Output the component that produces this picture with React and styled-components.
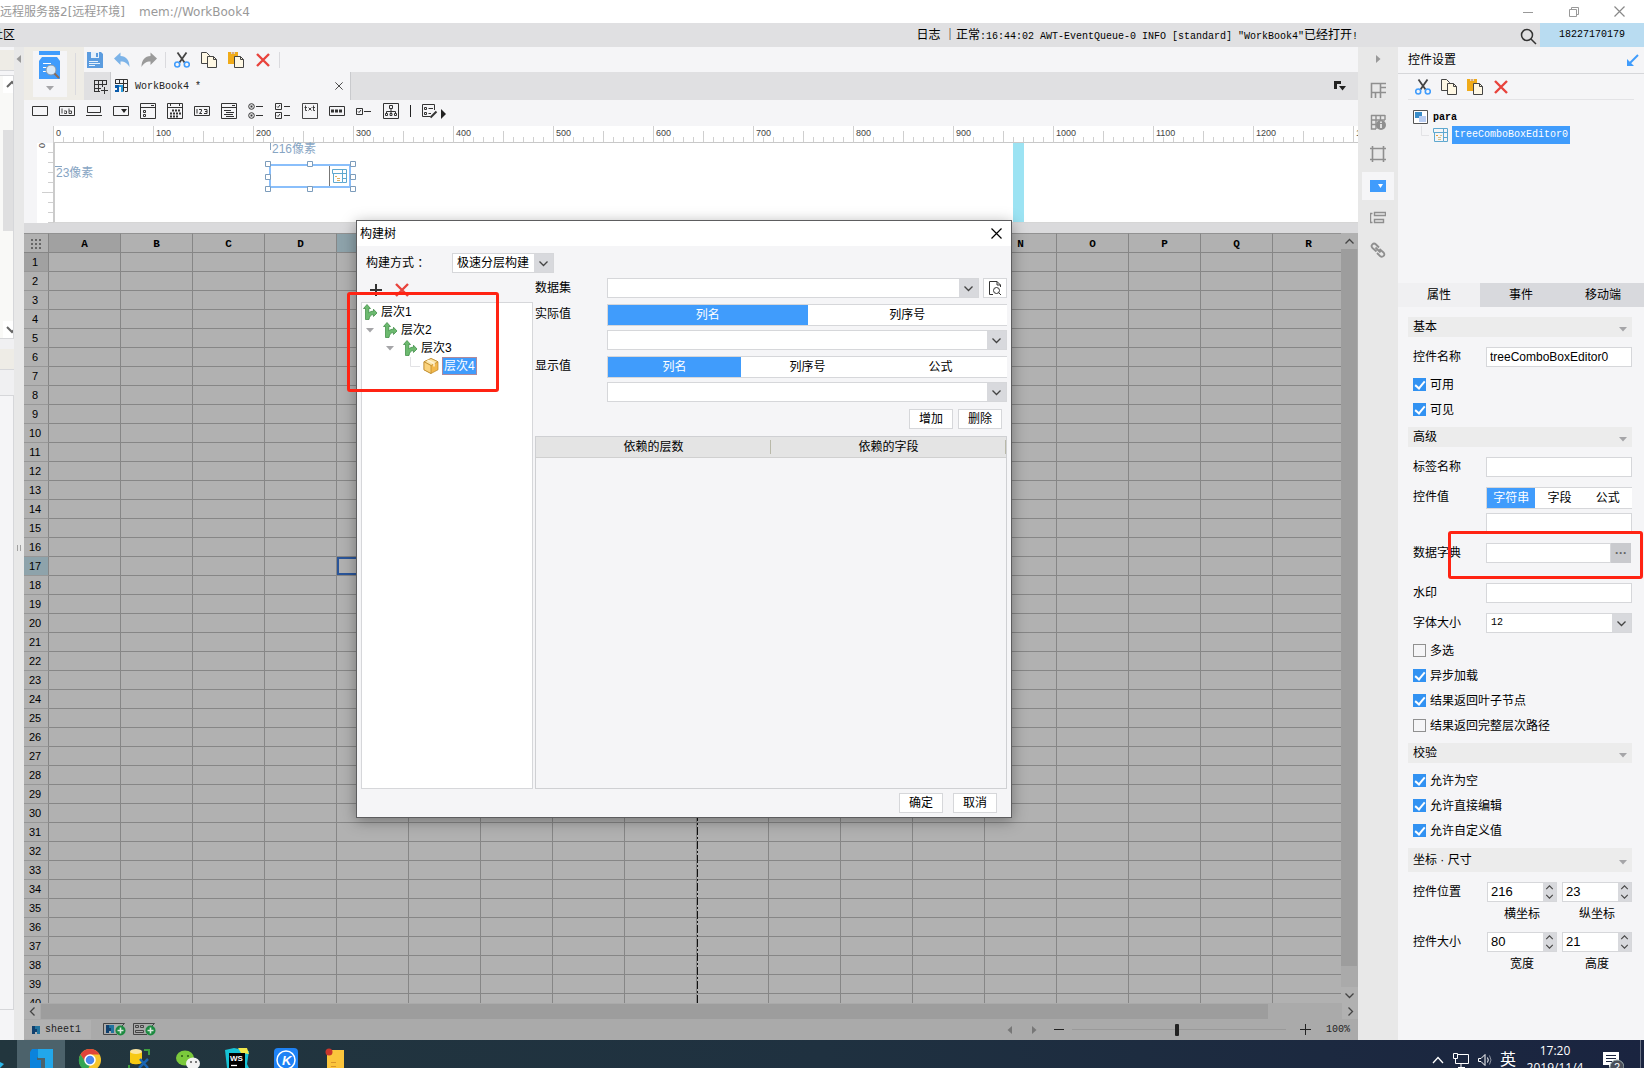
import React, { useState } from "react";
import styled, { createGlobalStyle, css } from "styled-components";

const GlobalStyle = createGlobalStyle`
  * {
    box-sizing: border-box;
  }

  body {
    margin: 0;
    overflow: hidden;
    background: #f5f5f7;
    color: #000;
    font-family: "Liberation Sans", "Noto Sans CJK SC", sans-serif;
    font-size: 12px;
    line-height: 16px;
  }

  button, input, select {
    margin: 0;
    padding: 0;
    border: none;
    border-radius: 0;
    outline: none;
    color: inherit;
    font: inherit;
    background: transparent;
  }

  svg {
    display: block;
    flex: none;
  }
`;

const mono = css`
  font-family: "Liberation Mono", "Noto Sans CJK SC", monospace;
  font-size: 10px;
`;

/* ---------- shell ---------- */

const Desktop = styled.div`
  position: relative;
  display: flex;
  flex-direction: column;
  height: 100vh;
  overflow: hidden;
`;

const TitleBar = styled.header`
  display: flex;
  align-items: center;
  justify-content: space-between;
  height: 23px;
  flex: none;
  background: #fff;
  color: #999;
  font-family: "DejaVu Sans", "Noto Sans CJK SC", sans-serif;

  p {
    display: flex;
    gap: 14px;
    margin: 0;
    white-space: nowrap;
  }

  div {
    display: flex;
    gap: 34px;
    padding-right: 19px;
  }
`;

const MenuBar = styled.div`
  display: flex;
  align-items: stretch;
  height: 24px;
  flex: none;
  overflow: hidden;
  background: #e0e0e2;
  line-height: 24px;
  white-space: nowrap;
`;

const CutMenu = styled.div`
  display: flex;
  justify-content: flex-end;
  width: 15px;
  overflow: hidden;
`;

const StatusLine = styled.p`
  flex: 1;
  margin: 0;
  padding-right: 160px;
  text-align: right;
`;

const Mono = styled.span`
  ${mono}
  white-space: pre;
`;

const SearchButton = styled.button`
  width: 22px;
  padding: 2px 0 0 2px;
`;

const Account = styled.a`
  ${mono}
  width: 104px;
  background: #b9dcf1;
  color: #000;
  text-align: center;
  text-decoration: none;
`;

const Workspace = styled.div`
  display: flex;
  flex: 1;
  min-height: 0;
`;

/* ---------- left edge ---------- */

const LeftEdge = styled.aside`
  display: flex;
  flex-direction: column;
  width: 14px;
  background: #f5f5f7;
`;

const EdgeStrip = styled.div`
  height: ${(p) => p.$h}px;
  background: ${(p) => p.$bg};
  border-bottom: ${(p) => (p.$line ? "1px solid #d6d7da" : "none")};
`;

const EdgeScroll = styled.div`
  display: flex;
  flex-direction: column;
  height: 264px;
  margin-top: 4px;
  padding-left: 3px;
  border: 1px solid #d6d7da;
  border-left: none;
  background: #f9f9f7;

  svg {
    background: #fff;
  }

  div {
    height: 101px;
    margin: 37px 0 90px;
    background: #dfdfe0;
  }
`;

const EdgeBox = styled.div`
  flex: 1;
  margin-bottom: 30px;
  border-right: 1px solid #d6d7da;
  border-bottom: 1px solid #d6d7da;
`;

const Splitter = styled.div`
  display: flex;
  flex-direction: column;
  align-items: center;
  justify-content: space-between;
  width: 10px;
  padding-top: 7px;
  background: #e8e8e8;

  i {
    width: 4px;
    height: 6px;
    margin-bottom: 489px;
    border: solid #a0a0a0;
    border-width: 0 1px;
  }
`;

/* ---------- editor ---------- */

const Editor = styled.main`
  display: flex;
  flex-direction: column;
  flex: 1;
  min-width: 0;
`;

const EditorHead = styled.div`
  display: flex;
  height: 53px;
  flex: none;
`;

const PreviewBlock = styled.div`
  display: flex;
  align-items: center;
  gap: 8px;
  width: 60px;
  padding-left: 9px;
  background: #eeece6;

  button {
    display: flex;
    flex-direction: column;
    align-items: center;
    gap: 4px;
    width: 34px;
    height: 46px;
    padding-bottom: 2px;
    background: #f5f5f7;
  }
`;

const Divider = styled.i`
  width: 1px;
  height: ${(p) => p.$h || 16}px;
  background: ${(p) => p.$color || "#dadade"};
`;

const HeadColumn = styled.div`
  display: flex;
  flex-direction: column;
  flex: 1;
`;

const ToolRow = styled.div`
  display: flex;
  align-items: center;
  gap: 8px;
  height: 25px;
  padding-left: 3px;
`;

const ToolGroup = styled.div`
  display: flex;
  gap: ${(p) => p.$gap || 11}px;
`;

const IconButton = styled.button`
  display: flex;
  align-items: center;
  justify-content: center;
  width: 16px;
  height: 16px;
`;

const TabRow = styled.div`
  display: flex;
  align-items: center;
  height: 28px;
  padding-left: 8px;
  background: #e0e0e2;

  > button:last-child {
    margin: 0 10px 0 auto;
  }
`;

const BookTab = styled.div`
  ${mono}
  display: flex;
  align-items: center;
  gap: 6px;
  width: 241px;
  height: 28px;
  margin-left: 2px;
  padding: 0 3px 0 4px;
  border: solid #c9cacd;
  border-width: 0 1px;
  background: #f5f5f7;
  color: #222;

  span {
    padding-top: 2px;
  }

  button {
    margin-left: auto;
  }
`;

const WidgetRow = styled.div`
  display: flex;
  align-items: center;
  gap: 11px;
  height: 26px;
  flex: none;
  padding: 0 0 4px 8px;
  background: #f5f5f7;
  color: #333;
`;

const RulerRow = styled.div`
  display: flex;
  height: 17px;
  flex: none;
  padding-left: 29px;
  overflow: hidden;
  background: linear-gradient(to right, #f5f5f7 29px, #fff 29px);
`;

const RulerStep = styled.span`
  width: 100px;
  flex: none;
  padding: 0 2px;
  border-left: 1px solid #cfcfcf;
  border-bottom: 1px solid #c8c8c8;
  background:
    repeating-linear-gradient(to right, transparent 0 9px, #d0d0d0 9px 10px) left bottom / 100% 5px no-repeat,
    linear-gradient(#cfcfcf, #cfcfcf) 49px bottom / 1px 11px no-repeat;
  color: #444;
  font-size: 9px;
  line-height: 14px;
`;

const CanvasRow = styled.div`
  display: flex;
  height: 80px;
  flex: none;
  padding-left: 13px;
  background: #f5f5f7;
`;

const SideRuler = styled.div`
  width: 16px;
  background:
    repeating-linear-gradient(to bottom, transparent 0 9px, #d0d0d0 9px 10px) right top / 5px 100% no-repeat,
    linear-gradient(#cfcfcf, #cfcfcf) right 49px / 11px 1px no-repeat #fff;
  color: #444;
  font-size: 9px;
  line-height: 10px;
  writing-mode: vertical-lr;
`;

const Canvas = styled.div`
  position: relative;
  flex: 1;
  border-left: 2px solid #cbcbcb;
  border-bottom: 1px solid #d6d6d6;
  background: linear-gradient(#9ce3f3, #9ce3f3) 958px 0 / 11px 100% no-repeat #fff;
`;

const SizeHint = styled.span`
  position: absolute;
  left: ${(p) => p.$x}px;
  top: ${(p) => p.$y}px;
  color: #87a5c3;
`;

const HintMarks = styled.div`
  position: absolute;
  left: 0;
  top: 0;
`;

const Placed = styled.div`
  position: absolute;
  left: 210px;
  top: 17px;
`;

const GridSplit = styled.div`
  height: 10px;
  flex: none;
  background: #dadadc;
`;

/* ---------- sheet ---------- */

const SheetArea = styled.div`
  display: flex;
  flex: 1;
  min-height: 0;
  background: #b1b1b1;
`;

const SheetView = styled.div`
  position: relative;
  flex: 1;
  min-width: 0;
  overflow: hidden;
`;

const Sheet = styled.table`
  width: 1321px;
  border-spacing: 0;
  table-layout: fixed;

  th, td {
    height: 19px;
    padding: 0;
    border: solid #868686;
    border-width: 0 1px 1px 0;
    font-size: 11px;
    font-weight: normal;
    line-height: 16px;
  }

  thead th {
    height: 20px;
    padding-top: 1px;
    border-top: 1px solid #929292;
    font-family: "Liberation Mono", monospace;
    font-weight: bold;
  }

  tbody th {
    padding-right: 2px;
    border-bottom-color: #979797;
  }
`;

const HeadCell = styled.th`
  width: ${(p) => (p.$corner ? 25 : 72)}px;
  background: ${(p) => (p.$active ? "#8ea3ab" : p.$first ? "#a1a1a1" : "#b1b1b1")};

  svg {
    margin: 0 auto;
  }
`;

const Cell = styled.td`
  box-shadow: ${(p) => (p.$selected ? "0 0 0 2px #2a5599 inset" : "none")};
`;

const PageBreak = styled.i`
  position: absolute;
  top: 20px;
  bottom: 0;
  left: 673px;
  width: 1px;
  background: repeating-linear-gradient(#111 0 8px, transparent 8px 10px, #111 10px 12px, transparent 12px 14px);
`;

const VScroll = styled.div`
  display: flex;
  flex-direction: column;
  width: 17px;
  background: #aaa;

  button {
    display: flex;
    justify-content: center;
    align-items: center;
    height: 16px;
    background: #b1b1b1;
  }

  div {
    flex: 1;
    margin: 0 1px 21px 0;
    background: #9d9d9d;
  }
`;

const HScroll = styled.div`
  display: flex;
  height: 16px;
  flex: none;
  background: #aaa;

  button {
    display: flex;
    justify-content: center;
    align-items: center;
    width: 16px;
    background: #b1b1b1;
  }

  div {
    flex: 1;
    margin: 1px 74px 0 1px;
    background: #9d9d9d;
  }
`;

const SheetBar = styled.div`
  display: flex;
  align-items: center;
  height: 21px;
  flex: none;
  background: #aaa;
  color: #222;
`;

const SheetTab = styled.button`
  ${mono}
  display: flex;
  align-items: center;
  gap: 4px;
  width: 67px;
  height: 19px;
  margin-right: 12px;
  padding-left: 8px;
  background: #b1b1b1;
`;

const ZoomBox = styled.div`
  display: flex;
  align-items: center;
  gap: 8px;
  margin-left: auto;
  padding-right: 8px;

  > div {
    margin-right: 7px;
  }

  input {
    width: 214px;
    height: 14px;
    appearance: none;
    background: linear-gradient(#999, #999) center / 100% 1px no-repeat;
  }

  input::-webkit-slider-thumb {
    appearance: none;
    width: 4px;
    height: 12px;
    border-radius: 1px;
    background: #222;
  }

  output {
    ${mono}
    margin-left: 2px;
  }
`;

/* ---------- right rail and properties ---------- */

const Rail = styled.nav`
  display: flex;
  flex-direction: column;
  align-items: center;
  gap: 4px;
  width: 40px;
  flex: none;
  padding-top: 7px;
  background: #e8e8e8;
  color: #8f8f8f;

  > svg {
    margin-bottom: 8px;
  }
`;

const RailButton = styled.button`
  display: flex;
  align-items: center;
  justify-content: center;
  width: 32px;
  height: 28px;
  background: ${(p) => (p.$active ? "#f5f5f7" : "transparent")};
`;

const Props = styled.aside`
  display: flex;
  flex-direction: column;
  width: 246px;
  flex: none;
  background: #f5f5f7;
`;

const PropsTitle = styled.div`
  display: flex;
  align-items: center;
  justify-content: space-between;
  height: 27px;
  padding: 0 5px 0 10px;
  border-bottom: 1px solid #d6d7da;
`;

const PropsTools = styled.div`
  display: flex;
  align-items: center;
  gap: 10px;
  height: 26px;
  margin: 0 10px;
  padding-left: 7px;
  border-bottom: 1px solid #e3e3e6;
`;

const PropsTree = styled.div`
  ${mono}
  display: flex;
  flex-direction: column;
  height: 183px;
  padding: 8px 0 0 15px;

  div {
    display: flex;
    align-items: center;
    gap: 5px;
    height: 18px;
  }

  div + div {
    gap: 4px;
    margin-left: 8px;
  }

  b {
    padding-top: 2px;
  }
`;

const TreeMark = styled.span`
  padding: 0 1px;
  border: 1px solid ${(p) => p.$edge || "#409cfc"};
  background: #409cfc;
  color: #fff;
`;

const PropsTabs = styled.div`
  display: flex;
  height: 24px;
  flex: none;

  button {
    flex: 1;
    background: #d8d9dd;
  }

  button:first-child {
    background: #f0f0f2;
  }
`;

const PropsBody = styled.div`
  display: flex;
  flex-direction: column;
  padding: 10px 12px 0 10px;
`;

const Section = styled.h3`
  display: flex;
  align-items: center;
  justify-content: space-between;
  height: ${(p) => (p.$tall ? 24 : 20)}px;
  margin: 0;
  padding: 0 4px 0 5px;
  background: #ececec;
  font-size: 12px;
  font-weight: normal;

  svg {
    margin-top: 4px;
  }
`;

const Field = styled.div`
  position: relative;
  display: flex;
  margin-top: 10px;
  padding-bottom: ${(p) => (p.$loose ? 10 : 0)}px;

  > label, > span {
    width: 78px;
    flex: none;
    padding-left: 5px;
    line-height: 20px;
  }
`;

const TextInput = styled.input`
  width: 100%;
  min-width: 0;
  height: 20px;
  padding: 0 3px;
  border: 1px solid #d6d7da;
  background: #fff;
`;

const MoreButton = styled.button`
  width: 20px;
  height: 20px;
  flex: none;
  margin-right: 1px;
  background: #c9cace;
  color: #666;
  font-weight: bold;
  line-height: 12px;
`;

const ValueColumn = styled.div`
  display: flex;
  flex-direction: column;
  flex: 1;
  gap: 4px;

  > * {
    flex: none;
  }
`;

const Segments = styled.div`
  display: flex;
  height: 22px;
  border: 1px solid #d6d7da;
  border-right: none;
  background: #fff;

  button {
    flex: 1;
  }

  button[aria-pressed="true"] {
    background: #409cfc;
    color: #fff;
  }
`;

const Checks = styled.div`
  padding: 5px 0 5px 5px;

  label {
    display: flex;
    align-items: center;
    gap: 4px;
    height: 25px;
  }

  input {
    display: flex;
    justify-content: center;
    width: 13px;
    height: 13px;
    appearance: none;
    border: 1px solid #909090;
    background: #f5f5f7;
  }

  input:checked {
    border-color: #3292f2;
    background: #3292f2;
  }

  input:checked::after {
    content: "";
    width: 4px;
    height: 8px;
    border: solid #fff;
    border-width: 0 2px 2px 0;
    transform: rotate(40deg);
  }
`;

const SelectBox = styled.div`
  display: grid;
  width: ${(p) => (p.$w ? p.$w + "px" : "100%")};
  height: 20px;
  border: 1px solid #d6d7da;
  background: linear-gradient(to left, #d8d9dd 19px, #fff 19px);

  select, svg {
    grid-area: 1 / 1;
  }

  select {
    padding: 0 4px;
    appearance: none;
    ${(p) => p.$mono && mono}
  }

  svg {
    align-self: center;
    justify-self: end;
    margin-right: 4px;
    pointer-events: none;
  }
`;

const SpinGroup = styled.div`
  display: flex;
  flex: 1;
  gap: 5px;
  padding-left: 1px;
`;

const Spin = styled.div`
  flex: 1;
  min-width: 0;
  text-align: center;

  > div {
    display: flex;
    height: 20px;
    border: 1px solid #d6d7da;
    background: #fff;
  }

  input {
    flex: 1;
    width: 0;
    min-width: 0;
    padding-left: 3px;
    appearance: textfield;
    font-size: 13px;
  }

  input::-webkit-inner-spin-button {
    display: none;
  }

  span {
    display: flex;
    flex-direction: column;
    width: 13px;
    background: #d8d9dd;
  }

  button {
    display: flex;
    align-items: center;
    justify-content: center;
    flex: 1;
  }

  label {
    display: block;
    padding-top: 4px;
  }
`;

const Highlight = styled.i`
  position: absolute;
  left: ${(p) => p.$x}px;
  top: ${(p) => p.$y}px;
  width: ${(p) => p.$w}px;
  height: ${(p) => p.$h}px;
  border: 3px solid #ff2313;
  border-radius: 3px;
  pointer-events: none;
`;

/* ---------- dialog ---------- */

const Dialog = styled.section`
  position: absolute;
  left: 356px;
  top: 220px;
  display: flex;
  flex-direction: column;
  width: 656px;
  height: 598px;
  border: 1px solid #5d5d5f;
  background: #f5f5f7;
  box-shadow: 0 3px 14px rgba(0, 0, 0, 0.35);
`;

const DialogTitle = styled.div`
  display: flex;
  align-items: center;
  justify-content: space-between;
  height: 25px;
  padding: 0 9px 0 3px;
  background: #fff;
`;

const BuildMode = styled.div`
  display: flex;
  align-items: center;
  padding: 7px 0 0 9px;

  label {
    width: 86px;
  }
`;

const DialogColumns = styled.div`
  display: flex;
  gap: 2px;
  flex: 1;
  padding: 5px 4px 0 4px;
`;

const TreeColumn = styled.div`
  display: flex;
  flex-direction: column;
  width: 172px;

  > div:first-child {
    display: flex;
    gap: 10px;
    height: 24px;
    padding: 4px 0 0 7px;
  }
`;

const TreeBox = styled.ul`
  flex: 1;
  margin: 0;
  padding: 0 0 0 1px;
  border: 1px solid #d6d7da;
  background: #fff;
  list-style: none;

  li {
    display: flex;
    align-items: center;
    gap: 3px;
    height: 18px;
  }
`;

const TreeIndent = styled.span`
  display: flex;
  justify-content: flex-end;
  width: ${(p) => p.$depth * 20 - 3}px;
  padding-right: ${(p) => (p.$leaf ? 0 : 5)}px;
`;

const FormColumn = styled.div`
  display: flex;
  flex-direction: column;
  gap: 6px;
  flex: 1;
`;

const FormRow = styled.div`
  display: flex;
  gap: 4px;

  > label, > span {
    width: 68px;
    flex: none;
    line-height: 20px;
  }
`;

const PushButton = styled.button`
  width: ${(p) => p.$w || 44}px;
  height: 20px;
  flex: none;
  border: 1px solid #d6d7da;
  background: #fff;

  svg {
    margin: 0 auto;
  }
`;

const ButtonRow = styled.div`
  display: flex;
  justify-content: flex-end;
  gap: ${(p) => p.$gap}px;
  padding: ${(p) => p.$pad};
`;

const DependBox = styled.div`
  flex: 1;
  border: 1px solid #cfd0d3;

  table {
    width: 100%;
    border-spacing: 0;
    table-layout: fixed;
    background: #e4e4e4;
  }

  th {
    height: 21px;
    padding: 0;
    border-bottom: 1px solid #d0d0d0;
    background: linear-gradient(#b9b9a9, #b9b9a9) right center / 1px 14px no-repeat;
    font-weight: normal;
  }
`;

/* ---------- taskbar ---------- */

const Taskbar = styled.footer`
  display: flex;
  align-items: flex-start;
  height: 28px;
  flex: none;
  overflow: hidden;
  background: linear-gradient(to right, #22363e, #1f3140 50%, #1a2440);
  color: #fff;
`;

const TaskButton = styled.button`
  display: flex;
  justify-content: center;
  width: ${(p) => (p.$first ? 48 : 49)}px;
  height: 40px;
  padding-top: 8px;
  background: ${(p) => (p.$first ? "#4c626b" : "transparent")};
`;

const Tray = styled.div`
  display: flex;
  gap: 7px;
  margin-left: auto;
  padding-top: 10px;
  font-size: 16px;
  line-height: 20px;
`;

const Clock = styled.time`
  width: 64px;
  margin: -8px 8px 0 0;
  font-family: "Open Sans", sans-serif;
  font-size: 12px;
  line-height: 17px;
  text-align: center;
`;

const TrayEdge = styled.i`
  width: 1px;
  height: 40px;
  margin: -10px 3px 0 9px;
  background: #6a7284;
`;

/* ---------- icons ---------- */

function Svg({ w = 16, h = 16, children, ...rest }) {
  return (
    <svg width={w} height={h} viewBox={`0 0 ${w} ${h}`} fill="none" stroke="currentColor" aria-hidden="true" {...rest}>
      {children}
    </svg>
  );
}

const Chevron = ({ dir = "down", w = 11 }) => {
  const turn = { down: 0, up: 180, left: 90, right: 270 }[dir];
  return (
    <Svg w={w} h={w} viewBox="0 0 11 11" stroke="#444">
      <path d="M1.5 3.5L5.5 7.5L9.5 3.5" transform={`rotate(${turn} 5.5 5.5)`} strokeWidth="1.3" />
    </Svg>
  );
};

const Triangle = ({ dir = "down", color = "#a5a5a8" }) => {
  const turn = { down: 0, left: 90, right: 270 }[dir];
  return (
    <Svg w={10} h={10} fill={color} stroke="none">
      <path d="M1 3H9L5 7.5Z" transform={`rotate(${turn} 5 5)`} />
    </Svg>
  );
};

const SaveIcon = () => (
  <Svg stroke="none">
    <path d="M0 0H14L16 2V16H0Z" fill="#5b9cdf" />
    <path d="M4 0H12V6H4Z" fill="#e7f1fb" />
    <path d="M9 1H11V5H9Z" fill="#5b9cdf" />
    <path d="M2 9.5H11M2 11.5H13" stroke="#e7f1fb" />
    <path d="M2 13.5H8" stroke="#e7f1fb" />
  </Svg>
);

const ArrowIcon = ({ color, flip }) => (
  <Svg fill={color} stroke="none">
    <path d="M0 6.5L6.5 0.5V4C12 4 15.5 8 15.5 15C13.5 11.5 11 9.5 6.5 9.5V13Z" transform={flip ? "matrix(-1 0 0 1 16 0)" : undefined} />
  </Svg>
);

const CutIcon = () => (
  <Svg>
    <path d="M3.5 0.5L10.5 10.5M12.5 0.5L5.5 10.5" stroke="#444" strokeWidth="1.8" />
    <circle cx="3.2" cy="12.5" r="2.5" stroke="#409cfc" strokeWidth="1.6" />
    <circle cx="12.8" cy="12.5" r="2.5" stroke="#409cfc" strokeWidth="1.6" />
  </Svg>
);

const CopyIcon = () => (
  <Svg stroke="#444">
    <path d="M0.5 0.5H5.5L8.5 3.5V11.5H0.5Z" fill="#fff8e4" />
    <path d="M6.5 4.5H12.5L15.5 7.5V15.5H6.5Z" fill="#fff8e4" />
    <path d="M12.5 4.5V7.5H15.5" />
  </Svg>
);

const PasteIcon = () => (
  <Svg stroke="none">
    <path d="M0 0H10V12H0Z" fill="#f0ab19" />
    <path d="M3 0H7V2H3Z" fill="#fff" />
    <path d="M3.5 1H6.5" stroke="#a65a12" />
    <path d="M6.5 4.5H12.5L15.5 7.5V15.5H6.5Z" fill="#fff8e4" stroke="#444" />
    <path d="M12.5 4.5V7.5H15.5" stroke="#444" />
  </Svg>
);

const DeleteIcon = () => (
  <Svg stroke="#e8433c" strokeWidth="2.4">
    <path d="M2 2L14 14M14 2L2 14" />
  </Svg>
);

const CloseIcon = ({ size = 11, color = "#333" }) => (
  <Svg w={size} h={size} viewBox="0 0 11 11" stroke={color}>
    <path d="M0.5 0.5L10.5 10.5M10.5 0.5L0.5 10.5" strokeWidth="1.2" />
  </Svg>
);

const PreviewIcon = () => (
  <Svg w={22} h={28} stroke="none">
    <path d="M0 0H21V4H0Z" fill="#409cfc" />
    <path d="M0 10L3 6H18L21 10V28H0Z" fill="#409cfc" />
    <path d="M4 12.5H12M4 16.5H8M4 20.5H8" stroke="#fff" />
    <circle cx="12" cy="19" r="5" fill="#d8e8f7" stroke="#8a97a5" />
    <path d="M15.5 22.5L20 27" stroke="#8b6b55" strokeWidth="2" />
  </Svg>
);

const TreeComboIcon = () => (
  <Svg w={15} h={14} stroke="#5fa8cf">
    <path d="M0.5 0.5H14.5V13.5H10.5V0.5M0.5 0.5V4.5H14.5M1.5 4.5V13.5H10.5M10.5 9.5H14.5" />
    <path d="M3 7.5H5" stroke="#e8a13a" />
    <path d="M5 9.5H8M5 11.5H8M7 7.5H9" stroke="#d8c28a" />
  </Svg>
);

const ParaIcon = () => (
  <Svg w={15} h={14}>
    <path d="M0.5 0.5H14.5V13.5H0.5Z" stroke="#555" fill="#fff" />
    <path d="M2 2H9V8H2Z" fill="#3a8cc8" stroke="none" />
    <path d="M6 6H13V12H6Z" fill="#b9cdf2" stroke="none" />
  </Svg>
);

const AddBookIcon = () => (
  <Svg w={15} h={15} stroke="#333">
    <path d="M1.5 1V12.5M5.5 1V12.5M9.5 1V8M13.5 1V6M1 1.5H14M1 5.5H14M1 9.5H8M1 12.5H7M11.5 8V15M8 11.5H15" />
  </Svg>
);

const BookIcon = () => (
  <Svg w={14} h={14} stroke="#333">
    <path d="M0.5 5V0.5H12.5V12.5H10M4.5 0.5V5M8.5 0.5V12.5M0 4.5H12.5M9 8.5H12.5" />
    <path d="M0 6H4V8H4V13H0V11H2V9H0Z" fill="#0b5cab" stroke="none" />
    <path d="M4 6H8V13H6V8H4Z" fill="#2a9de0" stroke="none" />
  </Svg>
);

const SheetIcon = () => (
  <Svg w={9} h={10} stroke="none">
    <path d="M0 1H3V4H5V7H3V9H0Z" fill="#10406e" />
    <path d="M3 1H8V9H5V4H3Z" fill="#22739e" />
  </Svg>
);

const AddSheetIcon = ({ form }) => (
  <Svg w={23} h={13} stroke="#444">
    <path d="M14 11.5H0.5V0.5H21.5L19 3" />
    {form ? (
      <path d="M2.5 2.5H5.5V4.5H2.5ZM7.5 2.5H10.5V4.5H7.5ZM2.5 7.5H10.5V9.5H2.5Z" />
    ) : (
      <g stroke="none">
        <path d="M3 2H6V5H8V8H6V10H3Z" fill="#10406e" />
        <path d="M6 2H11V10H8V5H6Z" fill="#22739e" />
      </g>
    )}
    <circle cx="17.5" cy="7.5" r="5" fill="#1c8a40" stroke="none" />
    <path d="M17.5 4.5V10.5M14.5 7.5H20.5" stroke="#d8e8dc" strokeWidth="1.6" />
  </Svg>
);

const BranchIcon = () => (
  <Svg w={15} h={16} fill="#6cba6f" stroke="#37873d">
    <path d="M4 0.5L7.5 4.5H5.8V9C7 7.6 8.5 7.2 10.5 7.2V5.2L14 9L10.5 12.5V10.6C8 10.6 6.500 12 6 15.500H2.500V4.500H0.500Z" strokeWidth="0.7" />
  </Svg>
);

const CubeIcon = () => (
  <Svg stroke="#b98422" strokeWidth="0.7">
    <path d="M8 0.5L15 3.8V11.8L8 15.5L1 11.8V3.8Z" fill="#f2b84c" />
    <path d="M8 0.5L15 3.8L8 7.5L1 3.8Z" fill="#fde6a8" />
    <path d="M8 7.5V15.5L1 11.8V3.8Z" fill="#fad27c" />
    <path d="M4.5 2.2L11 5.500V8.500" stroke="#fff4d8" strokeWidth="1.4" />
  </Svg>
);

// form widgets, in toolbar order
const widgets = [
  ["文本", <path d="M0.5 3.5H15.5V12.5H0.5Z" />],
  ["标签", <g><path d="M0.5 3.5H15.5V12.5H0.5Z" /><path d="M3 5.5V10.5M5 8H7.5V10.5H5.5V9.5M10 5.5V10.5H12.5V8H10" strokeWidth="0.9" /></g>],
  ["按钮", <path d="M1.5 3.5H14.5V9.5H1.5ZM0 12.5H16" />],
  ["下拉框", <g><path d="M0.5 3.5H15.5V12.5H0.5Z" /><path d="M8 6H14L11 10Z" fill="#222" stroke="none" /></g>],
  ["复选下拉", <path d="M0.5 0.5H15.5V15.5H0.5ZM0.5 4.5H15.5M3.5 7.5H5.5V9.5H3.5ZM3.5 11.5H5.5V13.5H3.5ZM11 2.5H14" />],
  ["日期", <g><path d="M0.5 0.5H15.5V15.5H0.5ZM0.5 4.5H15.5M3.5 1V3M12.5 1V3" /><path d="M5 7.5H14M3 10.5H14M3 13.5H11" strokeWidth="2" strokeDasharray="2 1" /></g>],
  ["数字", <path d="M0.5 3.5H15.5V12.5H0.5ZM3 6V10.5M5 6.5H7.5V8L5.5 10.5H8M10 6.5H13V10.5H10M11 8.5H13" />],
  ["下拉树", <path d="M0.5 0.5H15.5V15.5H0.5ZM0.5 4.5H15.5M3 7.5H10M5 9.5H13M3 11.5H12M5 13.5H13M11 2.5H14" />],
  ["单选组", <g><circle cx="3.5" cy="3.5" r="2.8" /><circle cx="3.5" cy="12.5" r="2.8" /><path d="M2.5 3.5H4.5M2.5 12.5H4.5" strokeWidth="2" /><path d="M8 3.5H15M8 12.5H15" /></g>],
  ["复选组", <path d="M0.5 0.5H6.5V6.5H0.5ZM0.5 9.5H6.5V15.5H0.5ZM2 3.5L3 4.5L5 2M2 12.5L3 13.5L5 11M9 3.5H15M9 12.5H15" />],
  ["文本域", <path d="M0.5 0.5H15.5V15.5H0.5ZM3.5 2.5V7.5H5M2.5 4.5H5M6.5 4.5L9.5 7.5M9.5 4.5L6.5 7.5M11.5 2.5V7.5H13M10.5 4.5H13" strokeWidth="0.9" />],
  ["密码", <g><path d="M0.5 3.5H15.5V12.5H0.5Z" /><path d="M2 8H14" strokeWidth="3" strokeDasharray="3 1" /></g>],
  ["复选框", <path d="M0.5 5.5H6.5V11.5H0.5ZM2 8.5L3 9.5L5 7M8 8.5H15" />],
  ["视图树", <path d="M0.5 0.5H15.5V15.5H0.5ZM6.5 2.5H9.5V5.5H6.5ZM8 6V10M3.5 10V8.5H12.5V10M2.5 10.5H4.5V12.5H2.5ZM7 10.5H9V12.5H7ZM11.5 10.5H13.5V12.5H11.5Z" />],
];

const railIcons = [
  <path d="M1.5 16V1.5H16M1.5 10.5H10.5V1.5M5.5 11V16M10.5 11V16M11 5.5H16M11 10.5H16" strokeWidth="1.6" />,
  <g><path d="M1 1.5H15M1.5 1V15H6M6 1V15M10.5 1V6M1 6H15M1 10.5H6M15 1V6" strokeWidth="1.4" /><circle cx="11" cy="11" r="5" fill="#8f8f8f" stroke="none" /><path d="M11 7.5V9M11 10V14" stroke="#e8e8e8" strokeWidth="1.8" /></g>,
  <path d="M2.5 0V16M13.5 0V16M0 2.5H16M0 13.5H16" strokeWidth="1.6" />,
  <g stroke="none"><path d="M0 2H16V14H0Z" fill="#409cfc" /><path d="M8 6H13L10.5 10Z" fill="#fff" /></g>,
  <path d="M2.5 3.5H0.5V12.5H2.5M4.5 2.5H15.5V5.5H4.5ZM4.5 9.5H13.5V12.5H4.5Z" strokeWidth="1.4" />,
  <path d="M6.5 9.5L2.5 6C0 3.5 3.5 0 6 2.5L9 5.5M9.5 7L13.5 10.5C16 13 12.5 16 10 14L7 11M5.5 5.5L10.5 10.5" strokeWidth="1.8" />,
];
const railNames = ["单元格元素", "单元格属性", "悬浮元素", "控件设置", "条件属性", "超级链接"];

/* ---------- parts ---------- */

const columns = "ABCDEFGHIJKLMNOPQR".split("");
const rows = Array.from({ length: 40 }, (_, i) => i + 1);
const rulerSteps = Array.from({ length: 14 }, (_, i) => i * 100);

function EditButtons() {
  return (
    <>
      <IconButton aria-label="剪切"><CutIcon /></IconButton>
      <IconButton aria-label="复制"><CopyIcon /></IconButton>
      <IconButton aria-label="粘贴"><PasteIcon /></IconButton>
      <IconButton aria-label="删除"><DeleteIcon /></IconButton>
    </>
  );
}

function Choice({ options }) {
  const [current, setCurrent] = useState(options[0]);
  return (
    <Segments>
      {options.map((option) => (
        <button key={option} aria-pressed={option === current} onClick={() => setCurrent(option)}>
          {option}
        </button>
      ))}
    </Segments>
  );
}

function Select({ id, value = "", w, mono: isMono }) {
  return (
    <SelectBox $w={w} $mono={isMono}>
      <select id={id} aria-label={id}>
        <option>{value}</option>
      </select>
      <Chevron />
    </SelectBox>
  );
}

function Check({ text, on }) {
  return (
    <label>
      <input type="checkbox" defaultChecked={on} />
      {text}
    </label>
  );
}

function Spinner({ id, value, caption }) {
  return (
    <Spin>
      <div>
        <input id={id} type="number" defaultValue={value} />
        <span>
          <button aria-label="增大"><Chevron dir="up" w={9} /></button>
          <button aria-label="减小"><Chevron w={9} /></button>
        </span>
      </div>
      <label htmlFor={id}>{caption}</label>
    </Spin>
  );
}

function SheetGrid() {
  return (
    <SheetView>
      <Sheet>
        <thead>
          <tr>
            <HeadCell $corner>
              <Svg w={11} h={11} stroke="#666" strokeWidth="2" strokeDasharray="2 2">
                <path d="M0 2H11M0 6H11M0 10H11" />
              </Svg>
            </HeadCell>
            {columns.map((name, i) => (
              <HeadCell key={name} $first={i === 0} $active={name === "E"}>{name}</HeadCell>
            ))}
          </tr>
        </thead>
        <tbody>
          {rows.map((row) => (
            <tr key={row}>
              <HeadCell $corner $first={row === 1} $active={row === 17}>{row}</HeadCell>
              {columns.map((name) => (
                <Cell key={name} $selected={row === 17 && name === "E"} />
              ))}
            </tr>
          ))}
        </tbody>
      </Sheet>
      <PageBreak />
    </SheetView>
  );
}

function EditorPane() {
  return (
    <Editor>
      <EditorHead>
        <PreviewBlock>
          <button aria-label="预览">
            <PreviewIcon />
            <Triangle />
          </button>
          <Divider $h={42} />
        </PreviewBlock>
        <HeadColumn>
          <ToolRow>
            <ToolGroup>
              <IconButton aria-label="保存"><SaveIcon /></IconButton>
              <IconButton aria-label="撤销"><ArrowIcon color="#7cb3e8" /></IconButton>
              <IconButton aria-label="重做"><ArrowIcon color="#9a9a9a" flip /></IconButton>
            </ToolGroup>
            <Divider />
            <ToolGroup>
              <EditButtons />
            </ToolGroup>
            <Divider />
          </ToolRow>
          <TabRow>
            <IconButton aria-label="新建工作簿"><AddBookIcon /></IconButton>
            <BookTab>
              <BookIcon />
              <span>WorkBook4 *</span>
              <IconButton aria-label="关闭"><CloseIcon size={8} /></IconButton>
            </BookTab>
            <IconButton aria-label="更多">
              <Svg w={12} h={12} stroke="none" fill="#222">
                <path d="M0 1H7V4H3V9H0ZM5 6H12L8.5 10.5Z" />
              </Svg>
            </IconButton>
          </TabRow>
        </HeadColumn>
      </EditorHead>
      <WidgetRow>
        {widgets.map(([name, drawing]) => (
          <IconButton key={name} aria-label={name} title={name}>
            <Svg>{drawing}</Svg>
          </IconButton>
        ))}
        <Divider $h={12} $color="#222" />
        <ToolGroup $gap={3}>
          <IconButton aria-label="控件管理">
            <Svg>
              <path d="M12.5 7V1.5H0.5V13.5H8M2.5 4.5H4.5V6.5H2.5ZM2.5 9.5H4.5V11.5H2.5ZM6.5 5.5H11M6.5 10.5H9" />
              <path d="M8.5 14.5L14.5 8.5" strokeWidth="2" />
            </Svg>
          </IconButton>
          <Svg w={5} h={16} stroke="none" fill="#222">
            <path d="M0 6L5 11L0 16Z" />
          </Svg>
        </ToolGroup>
      </WidgetRow>
      <RulerRow>
        {rulerSteps.map((n) => (
          <RulerStep key={n}>{n}</RulerStep>
        ))}
      </RulerRow>
      <CanvasRow>
        <SideRuler>0</SideRuler>
        <Canvas>
          <SizeHint $x={217} $y={-2}>216像素</SizeHint>
          <SizeHint $x={1} $y={22}>23像素</SizeHint>
          <HintMarks>
            <Svg w={220} h={24} stroke="#87a5c3">
              <path d="M0 23.5H7M215.5 0V7" />
            </Svg>
          </HintMarks>
          <Placed>
            <Svg w={92} h={32}>
              <path d="M5 5H85V27H5Z" stroke="#8abffb" strokeWidth="2" fill="#fff" />
              <path d="M64.5 6V26" stroke="#777" />
              <g stroke="#7c9cbb" fill="#fff">
                {[0.5, 42.5, 85.5].map((x) => (
                  <path key={x} d={`M${x} 1.5h5v5h-5ZM${x} 26.5h5v5h-5Z`} />
                ))}
                <path d="M0.5 14.5h5v5h-5ZM85.5 14.5h5v5h-5Z" />
              </g>
              <g transform="translate(67 9)" stroke="#5fa8cf">
                <path d="M0.5 0.5H14.5V13.5H10.5V0.5M0.5 0.5V4.5H14.5M1.5 4.5V13.5H10.5M10.5 9.5H14.5" />
                <path d="M3 7.5H5M5 9.5H8M5 11.5H8" stroke="#e0b060" />
              </g>
            </Svg>
          </Placed>
        </Canvas>
      </CanvasRow>
      <GridSplit />
      <SheetArea>
        <SheetGrid />
        <VScroll>
          <button aria-label="向上"><Chevron dir="up" /></button>
          <div />
          <button aria-label="向下"><Chevron /></button>
        </VScroll>
      </SheetArea>
      <HScroll>
        <button aria-label="向左"><Chevron dir="left" /></button>
        <div />
        <button aria-label="向右"><Chevron dir="right" /></button>
      </HScroll>
      <SheetBar>
        <SheetTab><SheetIcon />sheet1</SheetTab>
        <ToolGroup $gap={7}>
          <button aria-label="新增表"><AddSheetIcon /></button>
          <button aria-label="新增表单"><AddSheetIcon form /></button>
        </ToolGroup>
        <ZoomBox>
          <ToolGroup $gap={14}>
            <Triangle dir="left" color="#777" />
            <Triangle dir="right" color="#777" />
          </ToolGroup>
          <button aria-label="缩小"><Svg w={10} h={11} stroke="#222"><path d="M0 5.5H10" /></Svg></button>
          <input type="range" min="0" max="100" defaultValue="49" aria-label="缩放" />
          <button aria-label="放大"><Svg w={22} h={11} stroke="#222"><path d="M6 5.5H17M11.5 0V11" /></Svg></button>
          <output>100%</output>
        </ZoomBox>
      </SheetBar>
    </Editor>
  );
}

function PropsPane() {
  return (
    <Props>
      <PropsTitle>
        控件设置
        <Svg w={13} h={13} stroke="#409cfc" strokeWidth="2">
          <path d="M12 1L3 10" />
          <path d="M1 5V12H8Z" fill="#409cfc" stroke="none" />
        </Svg>
      </PropsTitle>
      <PropsTools>
        <EditButtons />
      </PropsTools>
      <PropsTree>
        <div><ParaIcon /><b>para</b></div>
        <div>
          <Svg w={8} h={18} stroke="#e2e2e5"><path d="M0.5 0V9.5H8" /></Svg>
          <TreeComboIcon />
          <TreeMark>treeComboBoxEditor0</TreeMark>
        </div>
      </PropsTree>
      <PropsTabs>
        <button>属性</button>
        <button>事件</button>
        <button>移动端</button>
      </PropsTabs>
      <PropsBody>
        <Section>基本<Triangle /></Section>
        <Field>
          <label htmlFor="widget-name">控件名称</label>
          <TextInput id="widget-name" defaultValue="treeComboBoxEditor0" />
        </Field>
        <Checks>
          <Check text="可用" on />
          <Check text="可见" on />
        </Checks>
        <Section>高级<Triangle /></Section>
        <Field>
          <label htmlFor="label-name">标签名称</label>
          <TextInput id="label-name" />
        </Field>
        <Field>
          <label htmlFor="widget-value">控件值</label>
          <ValueColumn>
            <Choice options={["字符串", "字段", "公式"]} />
            <TextInput id="widget-value" />
          </ValueColumn>
        </Field>
        <Field $loose>
          <label htmlFor="dictionary">数据字典</label>
          <TextInput id="dictionary" />
          <MoreButton aria-label="选择数据字典">···</MoreButton>
          <Highlight $x={40} $y={-12} $w={195} $h={48} />
        </Field>
        <Field>
          <label htmlFor="watermark">水印</label>
          <TextInput id="watermark" />
        </Field>
        <Field>
          <label htmlFor="font-size">字体大小</label>
          <Select id="font-size" value="12" mono />
        </Field>
        <Checks>
          <Check text="多选" />
          <Check text="异步加载" on />
          <Check text="结果返回叶子节点" on />
          <Check text="结果返回完整层次路径" />
        </Checks>
        <Section>校验<Triangle /></Section>
        <Checks>
          <Check text="允许为空" on />
          <Check text="允许直接编辑" on />
          <Check text="允许自定义值" on />
        </Checks>
        <Section $tall>坐标 · 尺寸<Triangle /></Section>
        <Field>
          <span>控件位置</span>
          <SpinGroup>
            <Spinner id="pos-x" value="216" caption="横坐标" />
            <Spinner id="pos-y" value="23" caption="纵坐标" />
          </SpinGroup>
        </Field>
        <Field>
          <span>控件大小</span>
          <SpinGroup>
            <Spinner id="size-w" value="80" caption="宽度" />
            <Spinner id="size-h" value="21" caption="高度" />
          </SpinGroup>
        </Field>
      </PropsBody>
    </Props>
  );
}

function BuildTreeDialog() {
  return (
    <Dialog role="dialog" aria-label="构建树">
      <DialogTitle>
        构建树
        <button aria-label="关闭"><CloseIcon color="#000" /></button>
      </DialogTitle>
      <BuildMode>
        <label htmlFor="build-mode">构建方式 ：</label>
        <Select id="build-mode" value="极速分层构建" w={102} />
      </BuildMode>
      <DialogColumns>
        <TreeColumn>
          <div>
            <IconButton aria-label="添加层次">
              <Svg stroke="#333" strokeWidth="2"><path d="M2 8H14M8 2V14" /></Svg>
            </IconButton>
            <IconButton aria-label="删除层次"><DeleteIcon /></IconButton>
          </div>
          <TreeBox>
            <li><BranchIcon />层次1</li>
            <li><TreeIndent $depth={1}><Triangle /></TreeIndent><BranchIcon />层次2</li>
            <li><TreeIndent $depth={2}><Triangle /></TreeIndent><BranchIcon />层次3</li>
            <li>
              <TreeIndent $depth={3} $leaf>
                <Svg w={10} h={18} stroke="#e2e2e5"><path d="M0.5 0V9.5H10" /></Svg>
              </TreeIndent>
              <CubeIcon />
              <TreeMark $edge="#b08a9c">层次4</TreeMark>
            </li>
          </TreeBox>
        </TreeColumn>
        <FormColumn>
          <FormRow>
            <label htmlFor="dataset">数据集</label>
            <Select id="dataset" />
            <PushButton $w={24} aria-label="预览数据集">
              <Svg w={14} h={16} stroke="#333">
                <path d="M5 14.5H1.5V1.5H9L12.5 5V7M9 1.5V5H12.5" />
                <circle cx="8.5" cy="10.5" r="3" />
                <path d="M10.5 12.5L13 15" />
              </Svg>
            </PushButton>
          </FormRow>
          <FormRow>
            <span>实际值</span>
            <ValueColumn>
              <Choice options={["列名", "列序号"]} />
              <Select id="real-value" />
            </ValueColumn>
          </FormRow>
          <FormRow>
            <span>显示值</span>
            <ValueColumn>
              <Choice options={["列名", "列序号", "公式"]} />
              <Select id="shown-value" />
            </ValueColumn>
          </FormRow>
          <ButtonRow $gap={5} $pad="1px 5px 1px 0">
            <PushButton>增加</PushButton>
            <PushButton>删除</PushButton>
          </ButtonRow>
          <DependBox>
            <table>
              <thead>
                <tr>
                  <th>依赖的层数</th>
                  <th>依赖的字段</th>
                </tr>
              </thead>
            </table>
          </DependBox>
        </FormColumn>
      </DialogColumns>
      <ButtonRow $gap={10} $pad="4px 14px 4px 0">
        <PushButton>确定</PushButton>
        <PushButton>取消</PushButton>
      </ButtonRow>
      <Highlight $x={-10} $y={71} $w={152} $h={100} />
    </Dialog>
  );
}

const taskIcons = [
  ["设计器", <g><path d="M3 1H10V8L8 10H8V24H1V4Z" fill="#0b83dc" /><path d="M9 1H24V24H16V10H9Z" fill="#22a7ea" /><path d="M1 12H12V24H1Z" fill="#0b83dc" /></g>],
  ["浏览器", <g><circle cx="12" cy="12" r="11" fill="#f7c52d" /><path d="M12 1A11 11 0 0 1 21.5 6.5H12L7 14L2.5 6.5A11 11 0 0 1 12 1Z" fill="#e0443a" /><path d="M2.5 6.5L8 15L12 17L9 23A11 11 0 0 1 2.5 6.5Z" fill="#35a554" /><circle cx="12" cy="12" r="5" fill="#4a86ee" stroke="#fff" strokeWidth="1.5" /></g>],
  ["数据库", <g><path d="M3 4V14C3 17 15 17 15 14V4Z" fill="#f7c914" /><ellipse cx="9" cy="3.5" rx="6" ry="2.5" fill="#fbe6a0" /><path d="M17 2H22V7M2 17V23" stroke="#3f9e3f" strokeWidth="2" fill="none" /><path d="M13 11L21 20M21 11L12 20" stroke="#1b66b3" strokeWidth="2.5" /></g>],
  ["聊天", <g><ellipse cx="9" cy="10" rx="9" ry="7.5" fill="#7bc93c" /><circle cx="6" cy="8" r="1" fill="#2b5a16" /><circle cx="12" cy="8" r="1" fill="#2b5a16" /><ellipse cx="17" cy="15.5" rx="7" ry="6" fill="#f2f2f2" /><circle cx="15" cy="14" r="1" fill="#555" /><circle cx="20" cy="14" r="1" fill="#555" /></g>],
  ["WebStorm", <g><path d="M0 2L9 0L24 3L22 16L24 20L10 24L2 20Z" fill="#17c3d6" /><path d="M13 0L22 0L24 6L16 5Z" fill="#f0e84c" /><path d="M4 5H20V21H4Z" fill="#000" /><text x="5" y="13" fontFamily="Liberation Sans" fontSize="8" fontWeight="bold" fill="#fff">WS</text><path d="M6 17.5H12" stroke="#fff" strokeWidth="1.3" /></g>],
  ["K", <g><rect width="24" height="24" rx="4" fill="#1e82f5" /><circle cx="12" cy="12" r="9" fill="none" stroke="#fff" strokeWidth="1.5" /><text x="8" y="17" fontFamily="Liberation Sans" fontSize="13" fontWeight="bold" fontStyle="italic" fill="#fff">K</text></g>],
  ["便笺", <g><path d="M4 2H21V24H4Z" fill="#fbc53c" /><path d="M8 14.5H13M8 18.5H13" stroke="#d8952a" /><circle cx="6" cy="4" r="3.5" fill="#c9362c" /></g>],
];

function WindowsTaskbar() {
  return (
    <Taskbar>
      <Svg w={17} h={28} stroke="none"><path d="M0 22L4 24L0 28Z" fill="#2bb6e8" /></Svg>
      {taskIcons.map(([name, drawing], i) => (
        <TaskButton key={name} $first={i === 0} aria-label={name}>
          <Svg w={24} h={24} stroke="none">{drawing}</Svg>
        </TaskButton>
      ))}
      <Tray>
        <Svg w={14} h={18} stroke="#fff"><path d="M2 13L7 7.5L12 13" strokeWidth="1.3" /></Svg>
        <Svg w={18} h={18} stroke="#fff"><path d="M5 4.5H16.5V13.5H3.5V10M9 14V17M6 17.5H13M1.5 3.5H5.5V8.5H1.5ZM3.5 8.5V11" /></Svg>
        <Svg w={16} h={18} stroke="#fff"><path d="M1.5 8.5H4L8 4.5V15.5L4 11.5H1.5ZM10.5 7.5Q12 10 10.5 12.5" /><path d="M12.5 5.5Q15.5 10 12.5 14.5" opacity="0.5" /></Svg>
        <span>英</span>
        <Clock>17:20<br />2019/11/4</Clock>
        <Svg w={22} h={22} stroke="none">
          <path d="M1 2H17V15H10L7 18V15H1Z" fill="#fff" />
          <path d="M4 5.5H14M4 8.5H14M4 11.5H10" stroke="#1a2440" />
          <circle cx="15" cy="17" r="7" fill="#4a4f5a" stroke="#9aa" />
          <text x="12" y="21" fontFamily="Liberation Sans" fontSize="11" fill="#fff">2</text>
        </Svg>
        <TrayEdge />
      </Tray>
    </Taskbar>
  );
}

function App() {
  return (
    <Desktop>
      <GlobalStyle />
      <TitleBar>
        <p>
          <span>远程服务器2[远程环境]</span>
          <span>mem://WorkBook4</span>
        </p>
        <div>
          <button aria-label="最小化"><Svg w={12} h={12}><path d="M1 6.5H11" /></Svg></button>
          <button aria-label="还原"><Svg w={12} h={12}><path d="M3.5 3V1.5H10.5V8.5H9M1.5 3.5H8.5V10.5H1.5Z" /></Svg></button>
          <button aria-label="关闭"><CloseIcon color="#888" /></button>
        </div>
      </TitleBar>
      <MenuBar>
        <CutMenu>社区</CutMenu>
        <StatusLine>
          日志 ｜正常<Mono>:16:44:02 AWT-EventQueue-0 INFO [standard] "WorkBook4"</Mono>已经打开<Mono>!</Mono>
        </StatusLine>
        <SearchButton aria-label="搜索">
          <Svg w={17} h={17} stroke="#333" strokeWidth="1.5"><circle cx="7" cy="7" r="5.5" /><path d="M11 11L16 16" /></Svg>
        </SearchButton>
        <Account href="#account">18227170179</Account>
      </MenuBar>
      <Workspace>
        <LeftEdge>
          <EdgeStrip $h={3} $bg="#f5f5f7" />
          <EdgeStrip $h={21} $bg="#eeece6" $line />
          <EdgeScroll>
            <Svg w={10} h={17} stroke="#666"><path d="M4 11L9 6L14 11" strokeWidth="2" /></Svg>
            <div />
            <Svg w={10} h={17} stroke="#666"><path d="M4 6L9 11L14 6" strokeWidth="2" /></Svg>
          </EdgeScroll>
          <EdgeStrip $h={10} $bg="#f0f0f2" />
          <EdgeStrip $h={21} $bg="#eeece6" $line />
          <EdgeStrip $h={26} $bg="#f0f0f2" $line />
          <EdgeBox />
        </LeftEdge>
        <Splitter>
          <Triangle dir="left" color="#999" />
          <i />
        </Splitter>
        <EditorPane />
        <Rail>
          <Triangle dir="right" color="#999" />
          {railIcons.map((drawing, i) => (
            <RailButton key={railNames[i]} aria-label={railNames[i]} $active={i === 3}>
              <Svg>{drawing}</Svg>
            </RailButton>
          ))}
        </Rail>
        <PropsPane />
      </Workspace>
      <WindowsTaskbar />
      <BuildTreeDialog />
    </Desktop>
  );
}

export default App;
